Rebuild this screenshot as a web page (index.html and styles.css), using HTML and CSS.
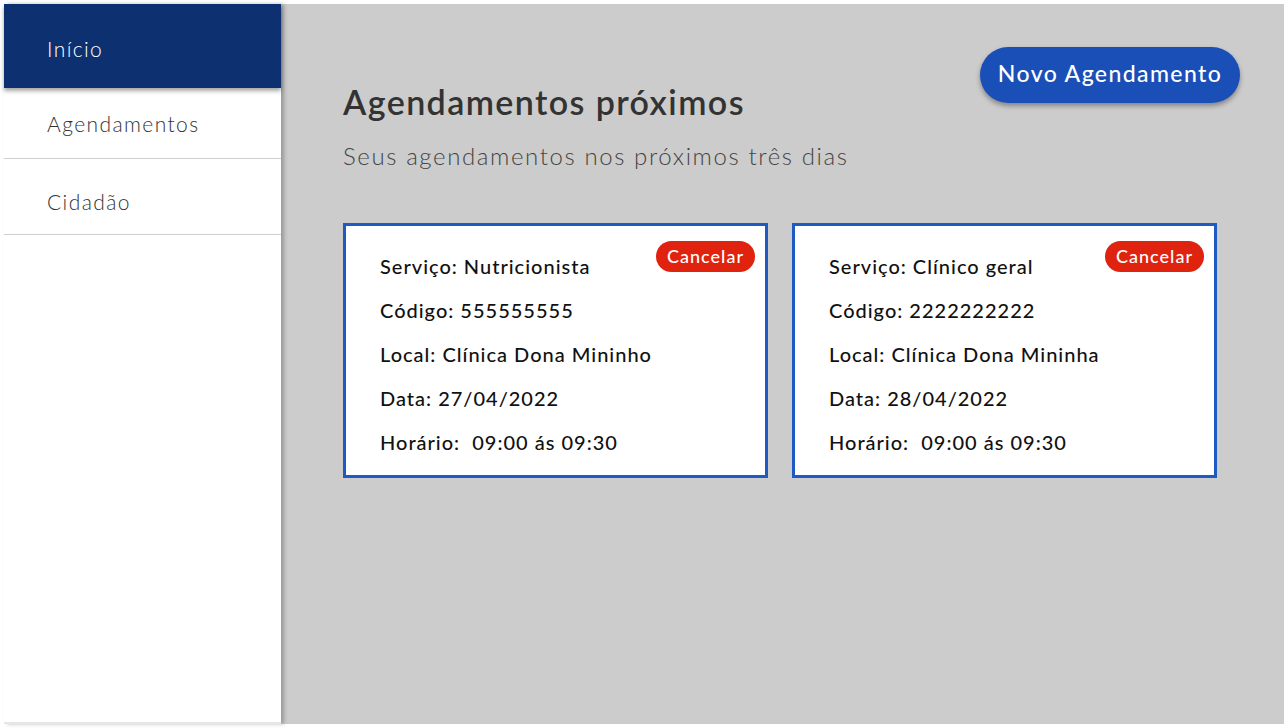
FILE: index.html
```html
<!DOCTYPE html>
<html lang="pt-BR">
<head>
<meta charset="utf-8">
<title>Agendamentos</title>
<link rel="stylesheet" href="styles.css">
</head>
<body>
<div class="app">
  <nav class="sidebar">
    <a class="nav-item active">Início</a>
    <a class="nav-item">Agendamentos</a>
    <a class="nav-item tall">Cidadão</a>
  </nav>
  <main class="main">
    <div class="header">
      <div class="titles">
        <h1 class="title">Agendamentos próximos</h1>
        <p class="subtitle">Seus agendamentos nos próximos três dias</p>
      </div>
      <button class="btn-new">Novo Agendamento</button>
    </div>
    <div class="cards">
      <div class="card">
        <button class="btn-cancel">Cancelar</button>
        <p class="line">Serviço: Nutricionista</p>
        <p class="line">Código: 555555555</p>
        <p class="line">Local: Clínica Dona Mininho</p>
        <p class="line">Data: 27/04/2022</p>
        <p class="line">Horário:&nbsp; 09:00 ás 09:30</p>
      </div>
      <div class="card">
        <button class="btn-cancel">Cancelar</button>
        <p class="line">Serviço: Clínico geral</p>
        <p class="line">Código: 2222222222</p>
        <p class="line">Local: Clínica Dona Mininha</p>
        <p class="line">Data: 28/04/2022</p>
        <p class="line">Horário:&nbsp; 09:00 ás 09:30</p>
      </div>
    </div>
  </main>
</div>
</body>
</html>
```
FILE: styles.css
```css
* { box-sizing: border-box; }
html, body { margin: 0; height: 100%; }
body {
  background: #ffffff;
  padding: 4px 0 4px 4px;
  font-family: "Lato", "Open Sans", sans-serif;
}
.app {
  display: flex;
  height: 720px;
}
.sidebar {
  width: 277px;
  flex: none;
  background: #fff;
  display: flex;
  flex-direction: column;
  border-bottom: 2px solid #e6e6e6;
  position: relative;
  z-index: 2;
  box-shadow: 3px 0 4px rgba(0,0,0,0.25);
}
.nav-item {
  display: flex;
  align-items: center;
  padding-left: 43px;
  height: 71px;
  font-size: 21px;
  font-weight: 300;
  color: #333;
  border-bottom: 1px solid #cfcfcf;
  letter-spacing: 1.4px;
}
.nav-item.tall {
  height: 76px;
  padding-top: 10px;
}
.nav-item.active {
  height: 84px;
  background: #0d3170;
  color: #fff;
  border-bottom: none;
  box-shadow: 0 3px 4px rgba(0,0,0,0.35);
  padding-top: 5px;
}
.main {
  flex: 1;
  background: #cccccc;
  padding: 42px 44px 0 62px;
}
.header {
  display: flex;
  justify-content: space-between;
  align-items: flex-start;
}
.titles { padding-top: 36px; }
.title {
  margin: 0;
  font-size: 34px;
  font-weight: 600;
  color: #333;
  line-height: 40px;
  letter-spacing: 1.4px;
}
.subtitle {
  margin: 19px 0 0;
  font-size: 24px;
  font-weight: 300;
  color: #444;
  line-height: 30px;
  letter-spacing: 1.6px;
}
.btn-new {
  width: 260px;
  height: 56px;
  border: none;
  border-radius: 28px;
  background: #1a4fb8;
  color: #fff;
  font-family: inherit;
  font-size: 23px;
  font-weight: 500;
  letter-spacing: 1.4px;
  box-shadow: 0 3px 5px rgba(0,0,0,0.35);
  margin-top: 1px;
  padding: 0 0 5px;
}
.cards {
  display: flex;
  gap: 24px;
  margin-top: 52px;
}
.card {
  position: relative;
  width: 425px;
  height: 255px;
  background: #fff;
  border: 3px solid #1f59c4;
  padding: 26px 20px 0 34px;
}
.line {
  margin: 0;
  height: 44px;
  font-size: 20px;
  font-weight: 500;
  color: #111;
  line-height: 28px;
  letter-spacing: 1px;
}
.btn-cancel {
  position: absolute;
  top: 15px;
  right: 10px;
  height: 31px;
  padding: 0 11px 2px;
  border: none;
  border-radius: 16px;
  background: #e0230e;
  color: #fff;
  font-family: inherit;
  font-size: 18px;
  font-weight: 500;
  letter-spacing: 1px;
}
```
